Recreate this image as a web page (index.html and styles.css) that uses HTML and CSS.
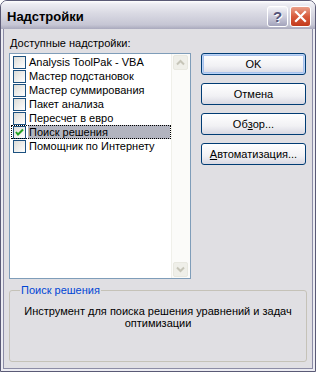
FILE: index.html
```html
<!DOCTYPE html>
<html lang="ru">

<head>
    <meta charset="UTF-8">
    <title>Надстройки</title>
    <link rel="stylesheet" href="styles.css">
</head>

<body>
    <div class="window">
        <div class="titlebar">
            <span class="title">Надстройки</span>
            <span class="cbtn help">?</span>
            <span class="cbtn close">
                <svg width="13" height="13" viewBox="0 0 13 13">
                    <path d="M2 2 L11 11 M11 2 L2 11" stroke="#fff" stroke-width="2.2" stroke-linecap="square"/>
                </svg>
            </span>
        </div>
        <div class="frame">
            <div class="content">
                <div class="top">
                    <div class="left">
                        <div class="caption"><u>Д</u>оступные надстройки:</div>
                        <div class="listbox">
                            <ul class="items">
                                <li><span class="check"></span><span class="name">Analysis ToolPak - VBA</span></li>
                                <li><span class="check"></span><span class="name">Мастер подстановок</span></li>
                                <li><span class="check"></span><span class="name">Мастер суммирования</span></li>
                                <li><span class="check"></span><span class="name">Пакет анализа</span></li>
                                <li><span class="check"></span><span class="name">Пересчет в евро</span></li>
                                <li class="selected"><span class="check on">
                                    <svg width="11" height="11" viewBox="0 0 11 11">
                                        <path d="M2 5 L4 7.5 L9 2.5" fill="none" stroke="#21a121" stroke-width="2"/>
                                    </svg>
                                </span><span class="name">Поиск решения</span></li>
                                <li><span class="check"></span><span class="name">Помощник по Интернету</span></li>
                            </ul>
                            <div class="scrollbar">
                                <span class="sbtn">
                                    <svg width="9" height="7" viewBox="0 0 9 7">
                                        <path d="M1 5.5 L4.5 2 L8 5.5" fill="none" stroke="#c6c5b8" stroke-width="2"/>
                                    </svg>
                                </span>
                                <span class="sbtn">
                                    <svg width="9" height="7" viewBox="0 0 9 7">
                                        <path d="M1 1.5 L4.5 5 L8 1.5" fill="none" stroke="#c6c5b8" stroke-width="2"/>
                                    </svg>
                                </span>
                            </div>
                        </div>
                    </div>
                    <div class="buttons">
                        <span class="btn default">OK</span>
                        <span class="btn">Отмена</span>
                        <span class="btn">Об<u>з</u>ор...</span>
                        <span class="btn"><u>А</u>втоматизация...</span>
                    </div>
                </div>
                <fieldset class="group">
                    <legend>Поиск решения</legend>
                    <p>Инструмент для поиска решения уравнений и задач оптимизации</p>
                </fieldset>
            </div>
        </div>
    </div>
</body>

</html>
```

FILE: styles.css
```css
body {
    margin: 0;
    background: #fff;
    font-family: "Liberation Sans", Arial, sans-serif;
    font-size: 11px;
    color: #000;
}

ul {
    list-style: none;
    padding: 0;
    margin: 0;
}

.window {
    width: 316px;
    height: 372px;
    box-sizing: border-box;
    border: 1px solid #5a5a76;
    border-radius: 7px 7px 0 0;
    background: #ececf2;
    display: flex;
    flex-direction: column;
    overflow: hidden;
}

.titlebar {
    height: 28px;
    display: flex;
    align-items: flex-start;
    padding: 5px 4px 0 6px;
    box-sizing: border-box;
    background: linear-gradient(#ffffff 0, #ececf2 3px, #d9d9e3 45%, #c6c6d4 85%, #a9a9bd 100%);
}

.title {
    flex: 1;
    font-size: 13px;
    font-weight: bold;
    line-height: 21px;
}

.cbtn {
    width: 21px;
    height: 21px;
    box-sizing: border-box;
    border: 1px solid #fff;
    border-radius: 3px;
    display: flex;
    align-items: center;
    justify-content: center;
}

.help {
    margin-right: 2px;
    background: linear-gradient(#f4f4f8, #c5c5d6 60%, #a3a3bb);
    color: #55557a;
    font-weight: bold;
    font-size: 15px;
    text-shadow: 1px 1px 0 #fff;
}

.close {
    background: linear-gradient(#eaa08a, #d85b3c 50%, #c2391c);
}

.frame {
    flex: 1;
    display: flex;
    padding: 0 2px 2px;
}

.content {
    flex: 1;
    background: #e0dfe3;
    border: 1px solid #8c8ca6;
    border-top: none;
    padding: 8px 5px 0;
}

.top {
    display: flex;
    gap: 10px;
}

.left {
    width: 182px;
}

.caption {
    line-height: 13px;
    margin: 0 0 3px 1px;
}

.listbox {
    height: 226px;
    box-sizing: border-box;
    border: 1px solid #7f9db9;
    background: #fff;
    display: flex;
}

.items {
    flex: 1;
    padding-top: 1px;
}

.items li {
    display: flex;
    align-items: center;
    height: 14px;
    margin-left: 1px;
    border: 1px solid transparent;
    border-width: 0 1px;
}

.check {
    width: 13px;
    height: 13px;
    box-sizing: border-box;
    border: 1px solid #1c5180;
    background: linear-gradient(135deg, #dcdcd7, #fff);
    margin-left: 1px;
    margin-right: 2px;
    display: flex;
    align-items: center;
    justify-content: center;
}

.name {
    flex: 1;
    line-height: 14px;
    padding-left: 1px;
}

.items li.selected {
    outline: 1px dotted #000;
    outline-offset: -1px;
}

.items li.selected .name {
    background: #b2b4bf;
}

.scrollbar {
    width: 17px;
    background: #fbfbf9;
    border-left: 1px solid #f0f0ea;
    display: flex;
    flex-direction: column;
    justify-content: space-between;
    padding: 1px 0 1px 1px;
}

.sbtn {
    width: 15px;
    height: 15px;
    box-sizing: border-box;
    border: 1px solid #e8e8e0;
    border-radius: 2px;
    background: #efefe9;
    display: flex;
    align-items: center;
    justify-content: center;
}

.buttons {
    width: 105px;
    margin-top: 16px;
    display: flex;
    flex-direction: column;
    gap: 8px;
}

.btn {
    height: 22px;
    box-sizing: border-box;
    border: 1px solid #003c74;
    border-radius: 3px;
    background: linear-gradient(#ffffff, #f1f1f4 60%, #d8d8e2);
    display: flex;
    align-items: center;
    justify-content: center;
}

.btn.default {
    box-shadow: inset 0 0 0 1px #bcd4f6, inset 0 0 0 2px #a8c2ec;
}

.group {
    margin: 5px 0 0;
    padding: 8px 6px 0;
    height: 68px;
    border: 1px solid #c5c2b8;
    border-radius: 3px;
}

.group legend {
    color: #0046d5;
    padding: 0 1px;
    margin-left: 4px;
    line-height: 13px;
}

.group p {
    margin: 0;
    text-align: center;
    line-height: 12px;
}
```
